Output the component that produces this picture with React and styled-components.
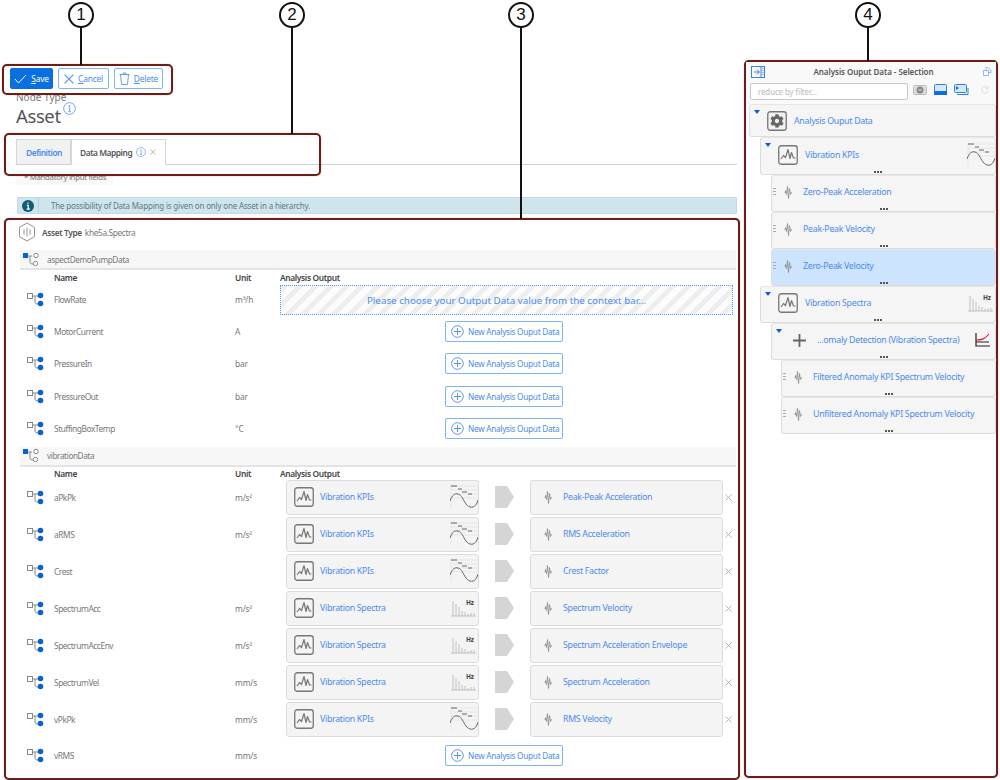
import React from "react";
import styled, { createGlobalStyle } from "styled-components";
import { FaCog } from "react-icons/fa";

const Global = createGlobalStyle`
  html, body { margin: 0; padding: 0; background: #fff; }
  * { box-sizing: border-box; }
  body { font-family: "Noto Sans", "Open Sans", sans-serif; color: #666; }
`;

const BLUE = "#4a8af0";
const FRAME = "#6e1c18";

const Page = styled.div`
  position: relative; width: 1000px; height: 780px; overflow: hidden;
  display: flex; align-items: flex-start; background: #fff;
`;
const Left = styled.div`
  width: 744px; height: 780px; padding-top: 68px; display: flex; flex-direction: column;
`;
const Toolbar = styled.div`display: flex; gap: 5px; padding-left: 10px; height: 21px;`;
const Btn = styled.button`
  height: 21px; width: ${p => p.$w}px; display: flex; align-items: center; justify-content: center; gap: 4px;
  padding: 0; border-radius: 2px; font: 8.4px "Noto Sans", sans-serif; letter-spacing: -.2px;
  border: 1px solid ${p => p.$primary ? "#0a6fe0" : "#7db4f5"};
  background: ${p => p.$primary ? "#0a6fe0" : "#fff"};
  color: ${p => p.$primary ? "#fff" : BLUE};
`;
const Title = styled.div`padding: 2px 0 0 16px; height: 50px; position: relative;`;
const Caption = styled.div`font-size: 10px; line-height: 13px; color: #777;`;
const Heading = styled.div`
  font-size: 18.5px; line-height: 26px; color: #555; display: flex; letter-spacing: -.4px; margin-top: -1px;
  & svg { margin: -1px 0 0 2px; }
`;
const TabBar = styled.div`
  display: flex; height: 26px; margin-left: 16px; width: 721px; border-bottom: 1px solid #cfcfcf;
`;
const Tab = styled.div`
  height: 26px; display: flex; align-items: center; gap: 4px; font-size: 8.4px; font-weight: 600; letter-spacing: -.45px;
  padding: 0 0 0 ${p => p.$active ? 8 : 9}px; width: ${p => p.$w}px;
  border: 1px solid #d6d6d6; border-bottom: ${p => p.$active ? "1px solid #fff" : "1px solid #cfcfcf"};
  background: ${p => p.$active ? "#fff" : "#f1f1f1"}; color: ${p => p.$active ? "#555" : BLUE};
`;
const Mandatory = styled.div`
  margin: 6px 0 0 16px; width: 97px; height: 14px; background: #f8f8f8; font-size: 7.8px; line-height: 13px;
  padding-left: 8px; color: #777; white-space: nowrap; letter-spacing: -.3px;
`;
const Notice = styled.div`
  margin: 12px 0 0 17px; width: 720px; height: 17px; background: #cfe5eb; border: 1px solid #c0dbe3;
  border-radius: 1px; display: flex; align-items: center; font-size: 8px; color: #5d7a85; letter-spacing: -.18px;
`;
const NoticeIcon = styled.div`
  width: 21px; height: 15px; display: flex; align-items: center; justify-content: center;
  border-right: 1px solid #b5d3dc; margin-right: 12px;
`;
const Section = styled.section`
  margin: 4px 0 0 4px; width: 736px; height: 562px; border: 2px solid ${FRAME}; border-radius: 5px;
  padding: 0 2px 0 14px; background: #fff; box-shadow: 0 0 1px rgba(60, 10, 10, .6);
`;
const AssetRow = styled.div`
  height: 26px; margin: 0 0 4px -2px; padding-bottom: 2px; display: flex; align-items: center; font-size: 8.3px; color: #777; letter-spacing: -.35px;
  & b { font-weight: 600; color: #555; margin: 0 3px 0 6px; }
`;
const GroupHead = styled.div`
  height: 20px; background: #f7f7f7; border-bottom: 2px solid #e4e4e4; display: flex; align-items: center;
  padding-left: 3px; font-size: 8.2px; color: #777; gap: 8px; letter-spacing: -.4px;
`;
const Grid = styled.div`
  display: grid; grid-template-columns: 34px 181px 45px 1fr; align-items: center;
  height: ${p => p.$h}px; font-size: 8.4px; color: #777;
`;
const ColHead = styled(Grid)`font-weight: 600; color: #444; padding-top: 1px; letter-spacing: -.35px;`;
const NameCell = styled.span`letter-spacing: -.45px;`;
const UnitCell = styled.span`letter-spacing: -.2px;`;
const RowIcon = styled.div`display: flex; padding-left: 7px;`;
const Output = styled.div`display: flex; align-items: center; min-width: 0;`;
const Drop = styled.div`
  width: 453px; height: 30px; display: flex; align-items: center; justify-content: center;
  border: 1px dotted #4f9cf0; font-size: 9.8px; color: ${BLUE}; margin-top: 2px;
  background: repeating-linear-gradient(135deg, #eee 0 5px, #fcfcfc 5px 11px);
`;
const AddBtn = styled.button`
  margin-left: 165px; width: 118px; height: 21px; display: flex; align-items: center; gap: 4px; padding: 0 0 0 5px;
  background: #fff; border: 1px solid #7db4f5; border-radius: 2px; color: ${BLUE}; font: 8.2px "Noto Sans", sans-serif;
  white-space: nowrap; letter-spacing: -.26px;
`;
const Card = styled.div`
  width: 193px; height: 35px; margin-left: ${p => p.$ml || 0}px; background: #f4f4f4; border: 1px solid #dcdcdc;
  border-radius: 3px; display: flex; align-items: center; padding-left: ${p => p.$pl}px; font-size: 8.8px;
  color: ${BLUE}; white-space: nowrap; position: relative; letter-spacing: -.3px;
`;
const CardText = styled.span`margin-left: ${p => p.$ml}px; flex: 1;`;
const Remove = styled.div`width: 10px; display: flex; justify-content: center; color: #aaa;`;
const Panel = styled.aside`
  margin-top: 60px; width: 254px; height: 718px; border: 2px solid ${FRAME}; border-radius: 5px; background: #fff;
  box-shadow: 0 0 1px rgba(60, 10, 10, .6);
`;
const PanelHead = styled.div`
  height: 19px; display: flex; align-items: center; padding: 0 4px 0 5px; background: #f9f9f9;
  font-size: 8px; font-weight: 600; color: #555;
`;
const PanelTitle = styled.div`flex: 1; text-align: center; padding-right: 1px; letter-spacing: -.05px;`;
const FilterRow = styled.div`
  height: 23px; background: #f9f9f9; display: flex; align-items: flex-start; padding: 2px 0 0 4px; gap: 5px;
`;
const Filter = styled.div`
  width: 158px; height: 17px; background: #fff; border: 1px solid #c9c9c9; border-radius: 2px;
  font-size: 8px; line-height: 15px; color: #bbb; padding-left: 7px; letter-spacing: -.15px;
`;
const FilterIcons = styled.div`display: flex; gap: 7px; align-items: center; height: 13px; & svg{display:block;}`;
const Tree = styled.div`padding-left: 3px;`;
const Item = styled.div`
  position: relative; height: ${p => p.$h}px; margin-left: ${p => p.$lvl}px; display: flex; align-items: center;
  padding: 0 0 ${p => p.$nodots ? 0 : 3}px 1px; background: ${p => p.$sel ? "#cde4ff" : "#f5f5f5"};
  border: 1px solid #dcdcdc; border-top-color: #e6e6e6; border-radius: 3px; font-size: 8.8px; color: ${BLUE};
  white-space: nowrap; letter-spacing: -.28px;
`;
const Caret = styled.div`
  width: 0; height: 0; border-left: 3px solid transparent; border-right: 3px solid transparent;
  border-top: 4px solid #0a5fd0; align-self: flex-start; margin: 5px 7px 0 3px;
`;
const Grip = styled.div`
  width: 3px; height: 9px; margin: 0 8px 0 0; flex: none;
  background: repeating-linear-gradient(180deg, #aaa 0 1px, transparent 1px 3px);
`;
const Label = styled.span`margin-left: ${p => p.$ml}px; flex: 1;`;
const Dots = styled.div`
  position: absolute; left: 50%; bottom: 1px; margin-left: -4px; width: 8px; height: 2px;
  background: repeating-linear-gradient(90deg, #555 0 1.6px, transparent 1.6px 3.2px);
`;
const Frame = styled.div`
  position: absolute; left: ${p => p.$x}px; top: ${p => p.$y}px; width: ${p => p.$w}px; height: ${p => p.$h}px;
  border: 2px solid ${FRAME}; border-radius: 5px; pointer-events: none; box-shadow: 0 0 1px rgba(60, 10, 10, .6);
`;
const Callout = styled.div`
  position: absolute; left: ${p => p.$x - 13}px; top: 2px; width: 26px; height: ${p => p.$end - 2}px;
  display: flex; flex-direction: column; align-items: center;
`;
const Bubble = styled.div`
  width: 26px; height: 26px; flex: none; border: 2px solid #111; border-radius: 50%; background: #fff;
  font: 17px/22px "Liberation Sans", sans-serif; color: #111; text-align: center;
`;
const Stem = styled.div`width: 2px; flex: 1; background: #111;`;
const Spacer = styled.div`height: 2px;`;

const Pulse = ({ s = 20 }) => (
  <svg width={s} height={s} viewBox="0 0 20 20" fill="none" stroke="#777" style={{ flex: "none" }}>
    <rect x=".75" y=".75" width="18.5" height="18.5" rx="2.5" strokeWidth="1.3" />
    <path d="M3 14l2.5-3.5 2 2L10 4.5l2 9 1.5-6 2 5.5H17.5" strokeWidth="1.2" strokeLinejoin="round" />
  </svg>
);
const Wave = () => (
  <svg width="9" height="13" viewBox="0 0 9 13" fill="none" stroke="#888" strokeWidth=".8" style={{ flex: "none" }}>
    <path d="M.5 6.5h1V4.5l1 4 1-8 1 12 1-10 1 6 1-2h.5" />
  </svg>
);
const Kpi = () => (
  <svg width="28" height="26" viewBox="0 0 28 26" fill="none" style={{ flex: "none" }}>
    <path d="M1 2h27M1 6h27M1 10h27M1 14h27M1 0v24" stroke="#ddd" strokeWidth=".6" />
    <path d="M1 2h6M8 5h4M12 8h5M18 10h4" stroke="#555" strokeWidth=".9" />
    <path d="M0 17C2 11 5 9 8 10c4 1 5 6 8 10 3 4 8 5 11-1l1-3" stroke="#666" strokeWidth="1" />
  </svg>
);
const Spectra = () => (
  <svg width="28" height="20" viewBox="0 0 28 20" fill="none" style={{ flex: "none" }}>
    <text x="16" y="6.5" fontSize="6.5" fontWeight="700" fill="#444" fontFamily="Noto Sans">Hz</text>
    <path d="M1 18h25M3 18V3M6 18V6M9 18V9M12 18v-5M15 18v-4M18 18v-2M21 18v-3M24 18v-3" stroke="#bbb" strokeWidth=".9" />
  </svg>
);
const NodeIco = () => (
  <svg width="18" height="15" viewBox="0 0 18 15" fill="none" style={{ flex: "none" }}>
    <rect x=".5" y="1.5" width="5" height="5" fill="#fff" stroke="#888" />
    <path d="M5.5 4H11M8 4v6c0 1.5 1 2 3 2" stroke="#888" />
    <circle cx="13.5" cy="3.5" r="2.8" fill="#0a62d0" /><circle cx="13.5" cy="11.5" r="2.8" fill="#0a62d0" />
  </svg>
);
const GroupIco = () => (
  <svg width="16" height="15" viewBox="0 0 16 15" fill="none" style={{ flex: "none" }}>
    <rect x="0" y="1" width="5" height="5" fill="#0a62d0" />
    <path d="M5 4h4M7 4v6c0 1.5 1 2 3 2" stroke="#888" />
    <circle cx="13" cy="3.5" r="2.2" fill="#fff" stroke="#888" /><circle cx="12.5" cy="11.5" r="2.2" fill="#fff" stroke="#888" />
  </svg>
);
const Info = ({ s = 12 }) => (
  <svg width={s} height={s} viewBox="0 0 12 12" fill="none" stroke="#5c95ee" style={{ flex: "none" }}>
    <circle cx="6" cy="6" r="5.4" strokeWidth=".8" />
    <path d="M5 4l1.2-.8V9M4.8 9h2.6" strokeWidth=".8" />
  </svg>
);
const Cross = ({ s = 8, c = "#aaa", w = 1 }) => (
  <svg width={s} height={s} viewBox="0 0 8 8" stroke={c} strokeWidth={w} style={{ flex: "none" }}>
    <path d="M.5.5l7 7M7.5.5l-7 7" />
  </svg>
);
const PlusRound = () => (
  <svg width="13" height="13" viewBox="0 0 13 13" fill="none" stroke="#4a8af0" strokeWidth=".9" style={{ flex: "none" }}>
    <circle cx="6.5" cy="6.5" r="5.8" /><path d="M6.5 3v7M3 6.5h7" />
  </svg>
);
const Arrow = () => (
  <svg width="19" height="22" viewBox="0 0 19 22" style={{ flex: "none", marginLeft: 16 }}>
    <path d="M0 0h12l7 11-7 11H0z" fill="#d5d5d5" />
  </svg>
);
const Hex = () => (
  <svg width="18" height="20" viewBox="0 0 18 20" fill="none" stroke="#888" strokeWidth=".9" style={{ flex: "none" }}>
    <path d="M9 1l7.5 4.3v9.4L9 19l-7.5-4.3V5.3z" /><path d="M6 7.5v5M9 5.5v9M12 7.5v5" />
  </svg>
);

const topRows = [
  ["MotorCurrent", "A"], ["PressureIn", "bar"], ["PressureOut", "bar"], ["StuffingBoxTemp", "°C"],
];
const maps = [
  ["aPkPk", "m/s²", "k", "Peak-Peak Acceleration"], ["aRMS", "m/s²", "k", "RMS Acceleration"],
  ["Crest", "", "k", "Crest Factor"], ["SpectrumAcc", "m/s²", "s", "Spectrum Velocity"],
  ["SpectrumAccEnv", "m/s²", "s", "Spectrum Acceleration Envelope"], ["SpectrumVel", "mm/s", "s", "Spectrum Acceleration"],
  ["vPkPk", "mm/s", "k", "RMS Velocity"],
];

const AddButton = () => <AddBtn><PlusRound />New Analysis Ouput Data</AddBtn>;
const Thumb = ({ k }) => k === "k" ? <Kpi /> : <Spectra />;

const Leaf = ({ lvl, sel, text, h = 37 }) => (
  <Item $lvl={lvl} $h={h} $sel={sel}><Grip /><Wave /><Label $ml={10}>{text}</Label><Dots /></Item>
);

export default function App() {
  return (
    <Page>
      <Global />
      <Left>
        <Toolbar>
          <Btn $primary $w={43}>
            <svg width="13" height="10" viewBox="0 0 13 10" fill="none" stroke="#fff"><path d="M1 5l3.5 4L12 1" /></svg><span><u>S</u>ave</span>
          </Btn>
          <Btn $w={51}><Cross s={10} c="#5c95ee" /><span><u>C</u>ancel</span></Btn>
          <Btn $w={49}>
            <svg width="11" height="13" viewBox="0 0 11 13" fill="none" stroke="#5c95ee" strokeWidth=".9"><path d="M.5 2.5h10M4 2.5V1h3v1.5M1.5 2.5l1 10h6l1-10" /></svg><span><u>D</u>elete</span>
          </Btn>
        </Toolbar>
        <Title>
          <Caption>Node Type</Caption>
          <Heading>Asset<Info s={13} /></Heading>
        </Title>
        <TabBar>
          <Tab $w={55}>Definition</Tab>
          <Tab $active $w={95}>Data Mapping <Info s={10} /><Cross s={6} /></Tab>
        </TabBar>
        <Mandatory>* Mandatory input fields</Mandatory>
        <Notice>
          <NoticeIcon>
            <svg width="12" height="12" viewBox="0 0 12 12"><circle cx="6" cy="6" r="6" fill="#0f5c73" /><path d="M6 2.4v1.4M4.8 5.3H6.3V9M4.6 9.2h3.4" stroke="#fff" strokeWidth="1.3" fill="none" /></svg>
          </NoticeIcon>
          The possibility of Data Mapping is given on only one Asset in a hierarchy.
        </Notice>
        <Section>
          <AssetRow><Hex /><b>Asset Type</b>khe5a.Spectra</AssetRow>
          <GroupHead><GroupIco />aspectDemoPumpData</GroupHead>
          <ColHead $h={13}><span /><span>Name</span><span>Unit</span><span>Analysis Output</span></ColHead>
          <Grid $h={32.4}>
            <RowIcon><NodeIco /></RowIcon><NameCell>FlowRate</NameCell><UnitCell>m³/h</UnitCell>
            <Output><Drop>Please choose your Output Data value from the context bar...</Drop></Output>
          </Grid>
          {topRows.map(([n, u]) => (
            <Grid $h={32.4} key={n}>
              <RowIcon><NodeIco /></RowIcon><NameCell>{n}</NameCell><UnitCell>{u}</UnitCell>
              <Output><AddButton /></Output>
            </Grid>
          ))}
          <Spacer />
          <GroupHead><GroupIco />vibrationData</GroupHead>
          <ColHead $h={12}><span /><span>Name</span><span>Unit</span><span>Analysis Output</span></ColHead>
          {maps.map(([n, u, k, out]) => (
            <Grid $h={37} key={n}>
              <RowIcon><NodeIco /></RowIcon><NameCell>{n}</NameCell><UnitCell>{u}</UnitCell>
              <Output>
                <Card $ml={6} $pl={7}>
                  <Pulse /><CardText $ml={6}>{k === "k" ? "Vibration KPIs" : "Vibration Spectra"}</CardText><Thumb k={k} />
                </Card>
                <Arrow />
                <Card $ml={16} $pl={13}><Wave /><CardText $ml={10}>{out}</CardText></Card>
                <Remove><Cross s={7} /></Remove>
              </Output>
            </Grid>
          ))}
          <Grid $h={35}>
            <RowIcon><NodeIco /></RowIcon><NameCell>vRMS</NameCell><UnitCell>mm/s</UnitCell><Output><AddButton /></Output>
          </Grid>
        </Section>
      </Left>
      <Panel>
        <PanelHead>
          <svg width="14" height="12" viewBox="0 0 14 12" fill="none" stroke="#3b82e8" style={{ flex: "none" }}>
            <rect x=".5" y=".5" width="13" height="11" /><path d="M3 6h5M6 3.5L8.5 6 6 8.5M10 1v10" /><path d="M12 2v8" strokeDasharray="1 1" />
          </svg>
          <PanelTitle>Analysis Ouput Data - Selection</PanelTitle>
          <svg width="9" height="9" viewBox="0 0 9 9" fill="none" stroke="#7aa6e8" strokeWidth=".8" style={{ flex: "none" }}>
            <path d="M.5 3.5h5v5h-5zM3 3.5V.5h2l3 3v2H5.5" />
          </svg>
        </PanelHead>
        <FilterRow>
          <Filter>reduce by filter...</Filter>
          <FilterIcons>
            <svg width="14" height="10" viewBox="0 0 14 10"><rect x=".5" y=".5" width="13" height="9" rx="1" fill="#ddd" stroke="#bbb" /><circle cx="7" cy="5" r="3.5" fill="#888" /><path d="M5 5h4" stroke="#ddd" /></svg>
            <svg width="13" height="11" viewBox="0 0 13 11"><rect x=".5" y=".5" width="12" height="10" rx="1" fill="#d8e8fb" stroke="#2f7fe0" /><rect y="7" width="13" height="4" fill="#0a6fe0" /></svg>
            <svg width="15" height="11" viewBox="0 0 15 11"><rect x=".5" y=".5" width="12" height="8" rx="1" fill="#d8e8fb" stroke="#2f7fe0" /><path d="M2 2l3 2-3 2z" fill="#0a6fe0" /><path d="M3 10.5h11V4" stroke="#2f7fe0" fill="none" /></svg>
            <svg width="8" height="8" viewBox="0 0 8 8" fill="none" stroke="#ddd" style={{ marginLeft: 5 }}><path d="M6.8 2.2A3.3 3.3 0 1 0 7.3 4.5M7 .5v2H5" /></svg>
          </FilterIcons>
        </FilterRow>
        <Tree>
          <Item $lvl={0} $h={33} $nodots>
            <Caret />
            <svg width="20" height="20" viewBox="0 0 20 20" fill="none" style={{ flex: "none" }}>
              <rect x=".75" y=".75" width="18.5" height="18.5" rx="2.5" stroke="#777" strokeWidth="1.3" fill="#f0f0f0" />
            </svg>
            <FaCog size={14} color="#666" style={{ marginLeft: -17, flex: "none" }} />
            <Label $ml={10}>Analysis Ouput Data</Label>
          </Item>
          <Item $lvl={11} $h={38}><Caret /><Pulse /><Label $ml={7}>Vibration KPIs</Label><Kpi /><Dots /></Item>
          <Leaf lvl={22} text="Zero-Peak Acceleration" />
          <Leaf lvl={22} text="Peak-Peak Velocity" />
          <Leaf lvl={22} sel text="Zero-Peak Velocity" />
          <Item $lvl={11} $h={37}><Caret /><Pulse /><Label $ml={7}>Vibration Spectra</Label><Spectra /><Dots /></Item>
          <Item $lvl={22} $h={37}>
            <Caret />
            <svg width="13" height="13" viewBox="0 0 13 13" style={{ flex: "none", marginLeft: 4 }}><path d="M6.5 0v13M0 6.5h13" stroke="#666" strokeWidth="1.8" /></svg>
            <Label $ml={11}>...omaly Detection (Vibration Spectra)</Label>
            <svg width="15" height="14" viewBox="0 0 15 14" fill="none" style={{ flex: "none", marginRight: 5 }}>
              <path d="M1 0v13h14" stroke="#222" strokeWidth="1.2" /><path d="M1 9h13" stroke="#222" /><path d="M1 7c6 0 9-1 13-6" stroke="#d22" strokeWidth="1.2" />
            </svg>
            <Dots />
          </Item>
          <Leaf lvl={32} text="Filtered Anomaly KPI Spectrum Velocity" />
          <Leaf lvl={32} text="Unfiltered Anomaly KPI Spectrum Velocity" />
        </Tree>
      </Panel>

      <Frame $x={2} $y={64} $w={171} $h={31} />
      <Frame $x={4} $y={133} $w={317} $h={43} />
      <Callout $x={81} $end={65}><Bubble>1</Bubble><Stem /></Callout>
      <Callout $x={292} $end={134}><Bubble>2</Bubble><Stem /></Callout>
      <Callout $x={521} $end={219}><Bubble>3</Bubble><Stem /></Callout>
      <Callout $x={868} $end={61}><Bubble>4</Bubble><Stem /></Callout>
    </Page>
  );
}
